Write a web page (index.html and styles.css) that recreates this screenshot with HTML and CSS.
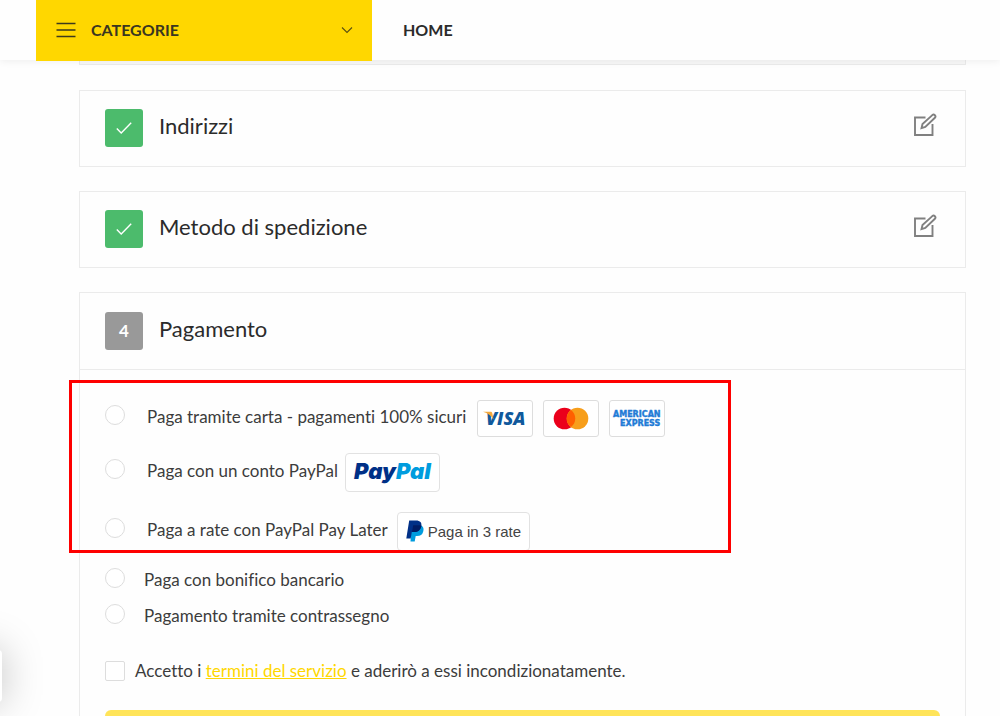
FILE: index.html
```html
<!DOCTYPE html>
<html lang="it">
  <head>
    <title>Pagamento</title>
    <meta charset="utf-8" />
    <meta name="viewport" content="width=device-width, initial-scale=1" />
    <link rel="stylesheet" href="styles.css">
  </head>
  <body>
    <header>
      <button type="button" class="categories">
        <svg width="20" height="16" viewBox="0 0 20 16" fill="none" stroke="#3d3a1c" stroke-width="1.6">
          <path d="M0.5 1.5h19M0.5 8h19M0.5 14.5h19" />
        </svg>
        <span>CATEGORIE</span>
        <svg class="arrow" width="12" height="8" viewBox="0 0 12 8" fill="none" stroke="#5a5010" stroke-width="1.1">
          <path d="M1 1.5l5 5 5-5" />
        </svg>
      </button>
      <nav><a href="#">HOME</a></nav>
    </header>

    <main>
      <section class="step previous"></section>

      <section class="step">
        <div class="step-head">
          <span class="badge done">
            <svg width="16" height="12" viewBox="0 0 16 12" fill="none" stroke="#fff" stroke-width="1.4">
              <path d="M0.8 6.5l4.4 4.5L15.2 0.8" />
            </svg>
          </span>
          <h2>Indirizzi</h2>
          <button type="button" class="edit" aria-label="Modifica indirizzi">
            <svg width="24" height="24" viewBox="0 0 24 24" fill="none" stroke="#808080" stroke-width="1.9">
              <path d="M12.5 4.5H2v17.500h17.500V11" />
              <path d="M8.5 15.2l1-4.2L19.3 2.1c1.800-1.500 4.200 1 2.600 2.700L12.300 14z" />
            </svg>
          </button>
        </div>
      </section>

      <section class="step">
        <div class="step-head">
          <span class="badge done">
            <svg width="16" height="12" viewBox="0 0 16 12" fill="none" stroke="#fff" stroke-width="1.4">
              <path d="M0.8 6.5l4.4 4.5L15.2 0.8" />
            </svg>
          </span>
          <h2>Metodo di spedizione</h2>
          <button type="button" class="edit" aria-label="Modifica metodo di spedizione">
            <svg width="24" height="24" viewBox="0 0 24 24" fill="none" stroke="#808080" stroke-width="1.9">
              <path d="M12.5 4.5H2v17.500h17.500V11" />
              <path d="M8.5 15.2l1-4.2L19.3 2.1c1.800-1.500 4.200 1 2.600 2.700L12.300 14z" />
            </svg>
          </button>
        </div>
      </section>

      <section class="step">
        <div class="step-head current">
          <span class="badge">4</span>
          <h2>Pagamento</h2>
        </div>
        <form class="payment">
          <div class="highlight">
            <div class="option">
              <input type="radio" name="payment" id="card" />
              <label for="card">Paga tramite carta - pagamenti 100% sicuri</label>
              <span class="cards">
                <span class="logo">
                  <svg width="54" height="35" viewBox="0 0 54 35">
                    <text class="visa" x="8" y="24">VISA</text>
                    <path d="M5 10.800h7.500c1 0 1.600.5 1.800 1.500l1.200 6.200C13 14.500 10 12.300 5 10.800z" fill="#f2a83b" />
                  </svg>
                </span>
                <span class="logo">
                  <svg width="54" height="35" viewBox="0 0 54 35">
                    <circle cx="20.500" cy="17.500" r="10.800" fill="#eb001b" />
                    <circle cx="33.500" cy="17.500" r="10.800" fill="#f79e1b" />
                    <path d="M27 8.900a10.800 10.800 0 0 1 0 17.200a10.800 10.800 0 0 1 0-17.200z" fill="#ff5f00" />
                  </svg>
                </span>
                <span class="logo">
                  <svg width="54" height="35" viewBox="0 0 54 35">
                    <text class="amex" x="3" y="16">AMERICAN</text>
                    <text class="amex" x="10" y="25">EXPRESS</text>
                  </svg>
                </span>
              </span>
            </div>
            <div class="option">
              <input type="radio" name="payment" id="paypal" />
              <label for="paypal">Paga con un conto PayPal</label>
              <span class="paypal-box"><span class="pay">Pay</span><span class="pal">Pal</span></span>
            </div>
            <div class="option tall">
              <input type="radio" name="payment" id="later" />
              <label for="later">Paga a rate con PayPal Pay Later</label>
              <span class="paypal-box rate">
                <svg width="18" height="22" viewBox="0 0 18 22">
                  <path d="M5.500 5H14c3.300 1 4 3.500 3.300 6.200-.7 3.300-3 4.800-6.300 4.800H9.700L8.700 21.500H4.500z" fill="#009cde" />
                  <path d="M3.200.5H10c4.200 0 6 2.200 5.300 5.700-.8 4-3.500 5.800-7.300 5.800H5.800L4.700 18.500H.3z" fill="#003087" />
                  <path d="M7.200 5.300h7c.6 0 .9.200 1.200.4-.8 4.200-3.300 6.300-7.400 6.300H6z" fill="#001c64" />
                </svg>
                Paga in 3 rate
              </span>
            </div>
          </div>
          <div class="option plain">
            <input type="radio" name="payment" id="bank" />
            <label for="bank">Paga con bonifico bancario</label>
          </div>
          <div class="option plain">
            <input type="radio" name="payment" id="cod" />
            <label for="cod">Pagamento tramite contrassegno</label>
          </div>
          <div class="terms">
            <input type="checkbox" id="terms" />
            <label for="terms">Accetto i <a href="#">termini del servizio</a> e aderirò a essi incondizionatamente.</label>
          </div>
          <button type="submit" class="order" aria-label="Ordina" disabled></button>
        </form>
      </section>
    </main>

    <div class="side-tab"></div>
  </body>
</html>
```

FILE: styles.css
```css
* {
  box-sizing: border-box;
  padding: 0;
  margin: 0;
}
body {
  font-family: Lato, sans-serif;
  font-size: 17px;
  line-height: 24px;
  font-variant-ligatures: none;
  color: #3c3c3c;
  background-color: #fefefe;
}
button {
  font-family: inherit;
  border: none;
  cursor: pointer;
}
header {
  position: relative;
  z-index: 1;
  display: flex;
  height: 60px;
  padding-left: 36px;
  background-color: #fefefe;
  box-shadow: 0 1px 8px rgba(0,0,0,0.07);
}
.categories {
  display: flex;
  align-items: center;
  gap: 15px;
  width: 336px;
  height: 61px;
  padding: 0 19px 2px 20px;
  background-color: #ffd700;
  color: #3a3620;
  font-size: 16px;
  font-weight: 700;
}
.categories .arrow {
  margin-left: auto;
}
nav {
  display: flex;
  align-items: center;
  padding-left: 31px;
}
nav a {
  color: #2b2b2b;
  font-size: 16px;
  font-weight: 700;
  text-decoration: none;
}
main {
  padding: 0 34px 24px 79px;
}
.step {
  margin-bottom: 24px;
  border: 1px solid #ebebeb;
}
.step.previous {
  height: 5px;
  margin-bottom: 25px;
  border-top: none;
  background-color: #f8f8f8;
}
.step-head {
  display: flex;
  align-items: center;
  height: 75px;
  padding: 0 26px 2px 25px;
}
.step-head.current {
  height: 77px;
  padding-bottom: 0;
  border-bottom: 1px solid #ebebeb;
}
.badge {
  display: flex;
  align-items: center;
  justify-content: center;
  width: 38px;
  height: 38px;
  border-radius: 3px;
  background-color: #999;
  color: #fff;
  font-weight: 700;
}
.badge.done {
  background-color: #4cbb6c;
}
h2 {
  padding: 0 0 4px 16px;
  color: #2b2b2b;
  font-size: 22px;
  line-height: 32px;
  font-weight: 400;
}
.edit {
  height: 24px;
  margin: 0 2px 6px auto;
  background: none;
}
.payment {
  padding: 21px 25px 24px;
}
.highlight {
  position: relative;
}
/* red frame round the card and PayPal options */
.highlight::after {
  content: "";
  box-sizing: border-box;
  position: absolute;
  top: -11px;
  bottom: 10px;
  left: -36px;
  width: 662px;
  border: 3px solid #fe0000;
  pointer-events: none;
}
.option {
  display: flex;
  align-items: center;
  height: 54px;
}
.option.tall {
  height: 64px;
}
.option.plain {
  height: 36px;
}
.option label {
  padding: 0 0 3px 22px;
}
.option.plain label {
  padding-left: 19px;
}
input {
  appearance: none;
  flex: none;
  width: 20px;
  height: 20px;
  border: 1px solid #ddd;
  background-color: #fff;
}
input[type="radio"] {
  margin-bottom: 6px;
  border-radius: 50%;
}
input[type="radio"]:checked {
  border: 6px solid #ffd700;
}
input[type="checkbox"] {
  border-radius: 2px;
}
input[type="checkbox"]:checked {
  background-color: #ffd700;
}
.cards {
  display: flex;
  gap: 10px;
  padding-left: 11px;
}
.logo {
  width: 56px;
  height: 37px;
  border: 1px solid #ddd;
  border-radius: 3px;
  background-color: #fff;
}
.logo svg {
  display: block;
}
.visa {
  font: italic 800 18px "Open Sans", sans-serif;
  fill: #10599c;
}
.amex {
  font: 700 8px "DejaVu Sans", sans-serif;
  fill: #1f7bd6;
  stroke: #1f7bd6;
  stroke-width: 0.4;
}
.paypal-box {
  display: flex;
  align-items: center;
  height: 39px;
  margin-left: 7px;
  padding: 0 8px 3px;
  border: 1px solid #e2e2e2;
  border-radius: 4px;
  background-color: #fff;
  font: italic 900 22px Inter, sans-serif;
}
.pay {
  color: #003087;
}
.pal {
  color: #009cde;
}
.paypal-box.rate {
  gap: 4px;
  margin-left: 9px;
  padding-bottom: 0;
  color: #444;
  font: 15px "Liberation Sans", Arial, sans-serif;
}
.terms {
  display: flex;
  align-items: center;
  gap: 10px;
  height: 36px;
  margin: 18px 0 21px;
}
.terms a {
  color: #ffd700;
}
.order {
  display: block;
  width: 100%;
  height: 50px;
  border-radius: 6px;
  background-color: #ffe459;
}
.side-tab {
  position: fixed;
  left: -48px;
  bottom: 14px;
  width: 50px;
  height: 52px;
  border-radius: 4px;
  background-color: #fff;
  box-shadow: 0 0 40px rgba(0,0,0,0.25);
}
```
